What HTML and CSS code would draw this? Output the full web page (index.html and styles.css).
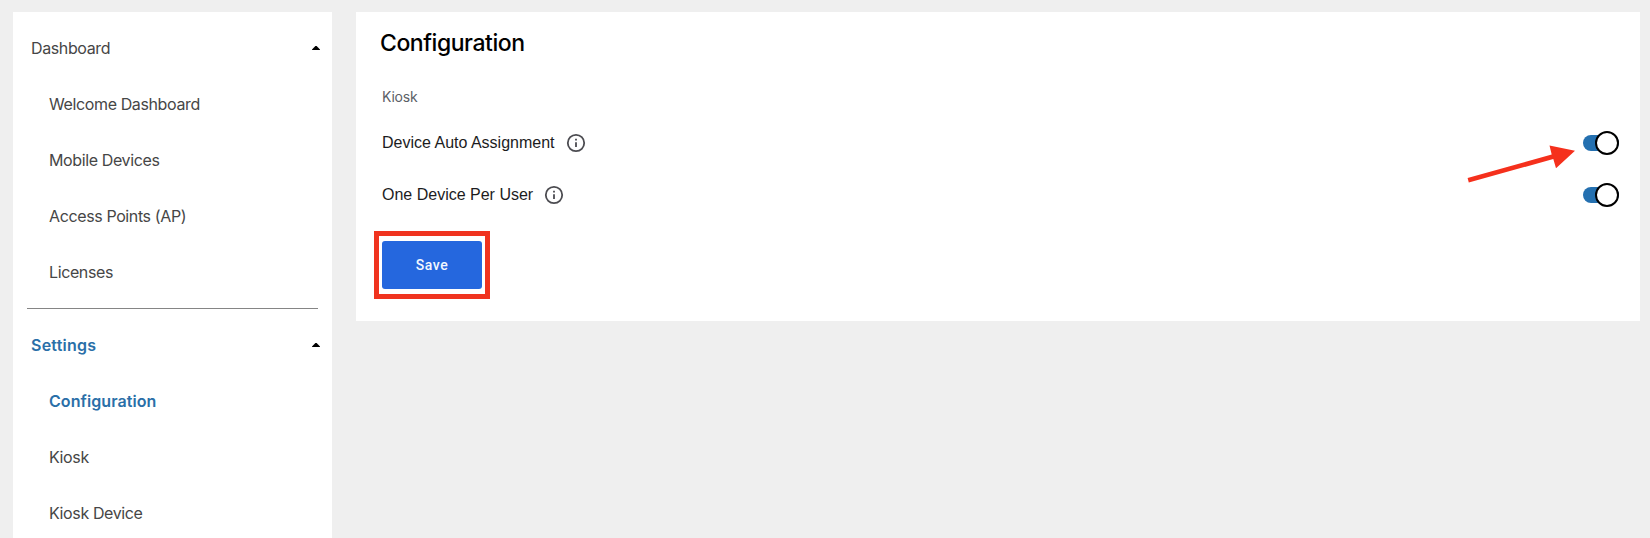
FILE: index.html
```html
<!DOCTYPE html>
<html lang="en">
<head>
<meta charset="utf-8">
<title>Configuration</title>
<link rel="stylesheet" href="styles.css">
</head>
<body>
<div class="app">
  <nav class="sidebar">
    <a class="group"><span>Dashboard</span><svg class="caret" width="8" height="4" viewBox="0 0 8 4"><path d="M0 4V3.4L3.4 0H4.6L8 3.4V4Z"/></svg></a>
    <a class="item">Welcome Dashboard</a>
    <a class="item">Mobile Devices</a>
    <a class="item">Access Points (AP)</a>
    <a class="item">Licenses</a>
    <hr class="divider">
    <a class="group active"><span class="heading">Settings</span><svg class="caret" width="8" height="4" viewBox="0 0 8 4"><path d="M0 4V3.4L3.4 0H4.6L8 3.4V4Z"/></svg></a>
    <a class="item active">Configuration</a>
    <a class="item">Kiosk</a>
    <a class="item">Kiosk Device</a>
  </nav>
  <main class="panel">
    <h1 class="title">Configuration</h1>
    <h2 class="section">Kiosk</h2>
    <div class="row">
      <span class="label">Device Auto Assignment</span>
      <svg class="info" width="20" height="20" viewBox="0 0 20 20"><circle cx="10" cy="10" r="8.2"/><path d="M10 9.2V14.1M10 5.8V7.6"/></svg>
      <span class="toggle"><span class="thumb"></span></span>
    </div>
    <div class="row">
      <span class="label">One Device Per User</span>
      <svg class="info" width="20" height="20" viewBox="0 0 20 20"><circle cx="10" cy="10" r="8.2"/><path d="M10 9.2V14.1M10 5.8V7.6"/></svg>
      <span class="toggle"><span class="thumb"></span></span>
    </div>
    <div class="highlight"><button class="save">Save</button></div>
    <svg class="arrow" width="110" height="44" viewBox="0 0 110 44"><path d="M2.6 38.1 86.7 14.4 84.5 5.4 110 10.8 91 28.3 88.3 19 3.8 42.5Z"/></svg>
  </main>
</div>
</body>
</html>
```
FILE: styles.css
```css
* { box-sizing: border-box; }
body { margin: 0; background: #efefef; font-family: Inter, "Liberation Sans", sans-serif; }
.app { display: flex; align-items: flex-start; gap: 24px; height: 538px; padding: 12px 10px 0 13px; overflow: hidden; }
.sidebar { width: 319px; height: 526px; padding-top: 8px; background: #fff; color: #464646; font-size: 16px; letter-spacing: -.38px; flex: none; overflow: hidden; }
.group, .item { display: flex; align-items: center; height: 56px; white-space: nowrap; }
.group { justify-content: space-between; padding: 0 12px 0 18px; }
.item { padding-left: 36px; }
.active { color: #2a6fa8; font-weight: 600; letter-spacing: .08px; }
.heading { letter-spacing: .22px; }
.caret { fill: #000; }
.divider { height: 1px; margin: 8px 14px; border: 0; background: #858585; }
.panel { position: relative; flex: 1; height: 309px; padding: 0 21px 0 26px; background: #fff; }
.title { margin: 0 0 0 -2px; padding-top: 16px; font-size: 23px; line-height: 30px; font-weight: 500; letter-spacing: -.45px; color: #000; }
.section { margin: 29px 0 0; font-size: 14px; line-height: 20px; font-weight: 400; letter-spacing: -.2px; color: #5b6066; }
.row { display: flex; align-items: center; height: 52px; font-family: "Liberation Sans", Arial, sans-serif; font-size: 16px; color: #1c1c1e; }
.section + .row { margin-top: 10px; }
.info { margin-left: 11px; fill: none; stroke: #4c4c51; stroke-width: 1.8; }
.toggle { display: flex; align-items: center; justify-content: flex-end; width: 36px; height: 16px; margin-left: auto; border-radius: 8px; background: #2470b0; }
.thumb { flex: none; width: 24px; height: 24px; border: 2px solid #000; border-radius: 50%; background: #fff; }
.highlight { width: 116px; height: 68px; margin: 10px 0 0 -8px; padding: 5px 3px; border: 5px solid #f0331f; }
.save { display: block; width: 100px; height: 48px; padding: 0; border: 0; border-radius: 3px; background: #2567de; color: #f2f7ff; font: 500 14px Roboto, sans-serif; letter-spacing: .5px; }
.arrow { position: absolute; left: 1109px; top: 128px; fill: #f5301c; }
```
